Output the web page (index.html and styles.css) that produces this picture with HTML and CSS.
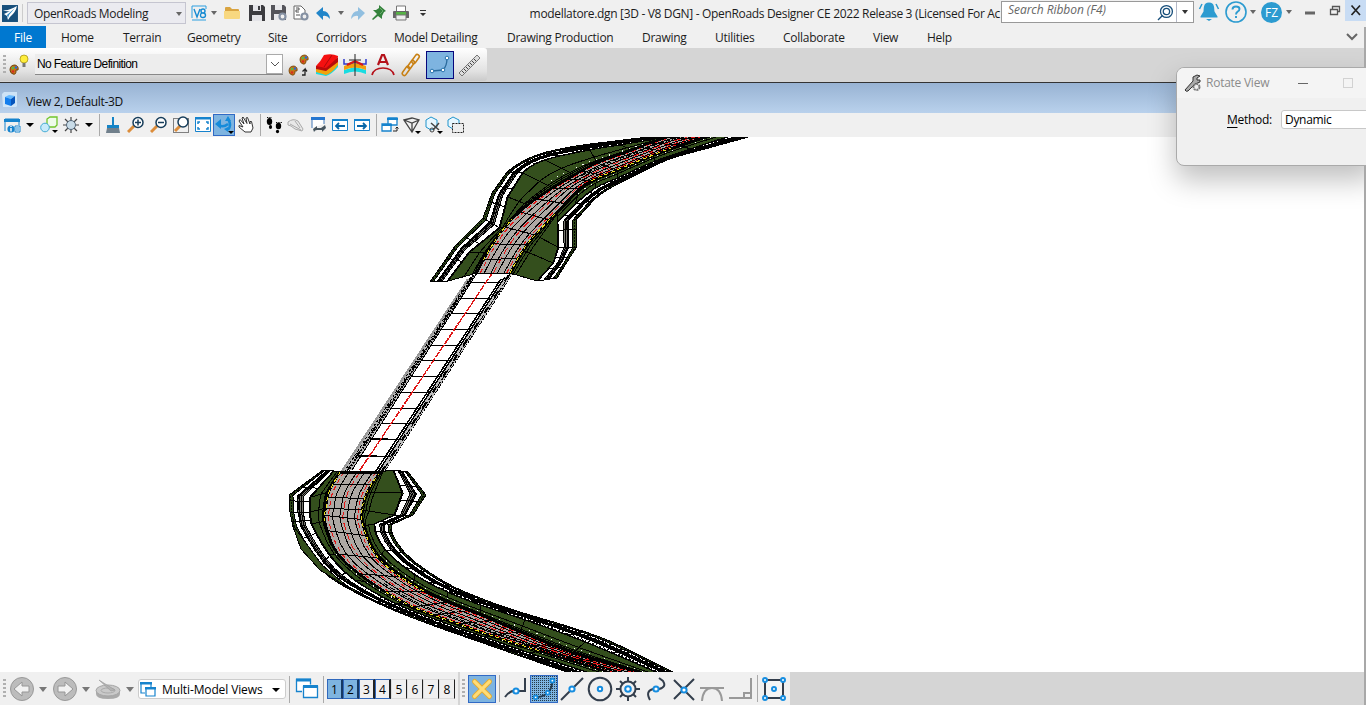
FILE: index.html
```html
<!DOCTYPE html>
<html lang="en">
<head>
<meta charset="utf-8">
<title>OpenRoads Designer</title>
<link rel="stylesheet" href="styles.css">
</head>
<body>
<div class="app">
  <header class="titlebar">
    <svg class="app-icon" viewBox="0 0 16 18"><rect width="16" height="17" y="1" fill="#174f7b"/><path d="M1 6q6 1 14-4-1 6-7 11l-2 3-1-4-3-2 6-3q-4 1-7-1z" fill="#fff"/><path d="M5 11l8-7-6 7-1 3z" fill="#2d86bf"/></svg>
    <i class="tsep"></i>
    <div class="workflow"><span>OpenRoads Modeling</span><i class="caret gray"></i></div>
    <div class="quick">
      <svg viewBox="0 0 16 16"><path d="M1 13V1h14v3M1 15h14" fill="none" stroke="#2d9fe0"/><path d="M3 4l3 8 3-8M12 4q2 0 2 2t-2 2q-2 0-2-2t2-2zM12 8q2.500 0 2.500 2.200T12 12.500t-2.500-2.300T12 8z" fill="none" stroke="#168bd2" stroke-width="1.400"/></svg>
      <i class="caret gray"></i>
      <svg viewBox="0 0 16 16"><path d="M1 3q0-1 1-1h4l2 2h6q1 0 1 1v9H1z" fill="#d9a441"/><path d="M0 6h16v7q0 1-1 1H1q-1 0-1-1z" fill="#f8d880"/></svg>
      <svg viewBox="0 0 16 16"><path d="M0 0h14l2 2v14H0z" fill="#3c3c40"/><path d="M4 0h8v6H4zM3 10h10v6H3z" fill="#e4e4e8"/><path d="M9 1h2v4H9z" fill="#3c3c40"/></svg>
      <svg viewBox="0 0 16 16"><path d="M0 0h13l2 2v13H0z" fill="#55555b"/><path d="M4 0h7v5H4zM3 9h8v6H3z" fill="#e9e9ec"/><circle cx="11.500" cy="11.500" r="3" fill="#f0f0f0" stroke="#8591a3" stroke-width="2.200"/></svg>
      <svg viewBox="0 0 16 16"><path d="M1 1h7l4 4v9H1z" fill="#fff" stroke="#666"/><path d="M3 3h3v2H3v2h3M3 10h4" stroke="#555" fill="none"/><circle cx="11.500" cy="11.500" r="3" fill="#eee" stroke="#8591a3" stroke-width="2.200"/></svg>
      <svg viewBox="0 0 16 16"><path d="M1 8l7-6v4q6 0 7 8-3-4-7-3v4z" fill="#2185c9"/></svg>
      <i class="caret gray"></i>
      <svg viewBox="0 0 16 16"><path d="M15 8L8 2v4Q2 6 1 14q3-4 7-3v4z" fill="#91bfe0"/></svg>
      <svg viewBox="0 0 16 16"><path d="M8 0l7 6-2 1-2 4v3l-4-3-5 4-1-1 5-5-4-4h3l3-2z" fill="#34823c"/><path d="M9 3l3 3-3 3" stroke="#6cae6c" fill="none"/></svg>
      <svg viewBox="0 0 16 16"><path d="M3.500 1h9v6h-9z" fill="#fff" stroke="#777"/><path d="M0 7q0-1 1-1h14q1 0 1 1v6H0z" fill="#666"/><path d="M3 7h10v3H3z" fill="#56b345"/><path d="M3 10h10v5H3z" fill="#eee" stroke="#777"/></svg>
      <svg viewBox="0 0 16 16"><path d="M5 5h6v1H5zM5 8h6l-3 3z" fill="#333"/></svg>
    </div>
    <div class="doc-title">modellatore.dgn [3D - V8 DGN] - OpenRoads Designer CE 2022 Release 3 (Licensed For Ac</div>
    <div class="search"><span>Search Ribbon (F4)</span><svg viewBox="0 0 18 18"><circle cx="10.500" cy="7.500" r="6"/><circle cx="10.500" cy="7.500" r="3.200"/><path d="M6.500 11.500L2 16"/></svg><b><i class="caret"></i></b></div>
    <div class="account">
      <svg viewBox="0 0 22 22"><path d="M11 1.500c6 0 5 6 5.500 9l3 5v1h-17v-1l3-5c.5-3-.5-9 5.500-9zM8 18h6l-3 2z" fill="#2c9bd0"/><path d="M4 3L1.500 8M18 3l2.500 5" stroke="#2c9bd0" stroke-width="1.500"/></svg>
      <svg viewBox="0 0 22 22"><circle cx="11" cy="11" r="10" fill="none" stroke="#2c9bd0" stroke-width="1.600"/><path d="M7.500 8.500q0-3 3.500-3t3.500 2.500q0 1.500-2 2.800Q11 12 11 13.500M11 15v2" fill="none" stroke="#2c9bd0" stroke-width="1.900"/></svg>
      <i class="caret gray"></i>
      <span class="avatar">FZ</span>
      <i class="caret gray"></i>
      <svg viewBox="0 0 22 22"><path d="M6 10.500h10v3H6z" fill="#666"/></svg>
      <svg viewBox="0 0 22 22"><path d="M5.500 8.500h7v5h-7zM7.500 8V5.500h7v5H13" fill="none" stroke="#555" stroke-width="1.300"/></svg>
      <span class="close"><svg viewBox="0 0 22 22"><path d="M6.500 5.500l8.500 9.500M15 5.500L6.500 15" stroke="#222" stroke-width="1.700"/></svg></span>
    </div>
  </header>

  <nav class="tabs">
    <span class="file">File</span><span>Home</span><span>Terrain</span><span>Geometry</span><span>Site</span><span>Corridors</span><span>Model Detailing</span><span>Drawing Production</span><span>Drawing</span><span>Utilities</span><span>Collaborate</span><span>View</span><span>Help</span>
    <svg viewBox="0 0 12 8"><path d="M1 1l5 5 5-5" fill="none" stroke="#666" stroke-width="2"/></svg>
  </nav>

  <div class="feature-row">
    <div class="feature-bar">
      <i class="grip"></i>
      <svg class="f-palette" viewBox="0 0 20 24"><path d="M1 17q0-5 5-5 4 1 3 5H7v1q0 4-3 3-3-1-3-4z" fill="#c67217" stroke="#70420c"/><circle cx="4" cy="15" r="1.300" fill="#52b948"/><circle cx="7" cy="14.500" r="1.200" fill="#2a66d8"/><circle cx="4" cy="18.500" r="1.200" fill="#d62b20"/><circle cx="15" cy="6" r="4" fill="#ffee3c" stroke="#9c8812" stroke-width=".7"/><path d="M13.500 10h3v4h-3z" fill="#777"/></svg>
      <div class="feature-select"><span>No Feature Definition</span><b><svg viewBox="0 0 10 6"><path d="M1 1l4 4 4-4" fill="none" stroke="#555"/></svg></b></div>
      <div class="feature-tools">
        <svg viewBox="0 0 24 24"><g stroke="#70420c" stroke-width=".8" fill="#c67217"><path d="M2 18q0-5 5-5 4 1 3 5H8v2q-1 3-3 2-3-1-3-4z"/><path d="M13 7q0-5 5-5 4 1 3 5h-2v2q-1 3-3 2-3-1-3-4z"/></g><g fill="#52b948"><circle cx="5" cy="16" r="1.300"/><circle cx="16" cy="5" r="1.300"/></g><g fill="#2a66d8"><circle cx="8" cy="15.500" r="1.200"/><circle cx="19" cy="4.500" r="1.200"/></g><g fill="#d62b20"><circle cx="5" cy="19.500" r="1.200"/><circle cx="16" cy="8.500" r="1.200"/></g><path d="M15 22h3v-6l-2.500 2.500m2.500-2.500l2 2.500" fill="none" stroke="#222" stroke-width="1.300"/></svg>
        <svg viewBox="0 0 24 24"><path d="M1 18l9 3q6-1 13-10v3q-6 7-12 9l-10-2z" fill="#16dce2"/><path d="M1 15l10 2L23 8v4q-6 8-12 10L1 19z" fill="#f2a20c"/><path d="M1 13v3l10 2L23 9V4l-12 9z" fill="#b80b0b"/><path d="M1 13Q6 8 9 2q8-2 14 1v1Q18 9 11 15z" fill="#f51010"/><path d="M17 2l-8 12" fill="none" stroke="#8c0909" stroke-width=".7"/></svg>
        <svg viewBox="0 0 24 24"><path d="M1 17l11-3 11 3v4q-11-5-22 0z" fill="#17dce1"/><path d="M1 13l11-4 11 4v4q-11-5-22 0z" fill="#f1a00e"/><path d="M1 6v5h5l6-2 6 2h5V6" fill="none" stroke="#303bd0" stroke-width="1.500"/><path d="M4 12l8-4 8 4" fill="none" stroke="#d81818" stroke-width="2"/><path d="M6 7h12M12 1v22" stroke="#222"/></svg>
        <svg viewBox="0 0 24 24"><path d="M7 12l4-10h2l4 10M8.500 9h7" fill="none" stroke="#b5121b" stroke-width="2.200"/><path d="M1 22q2-7 11-7t11 7" fill="none" stroke="#b5121b" stroke-width="1.700"/></svg>
        <svg viewBox="0 0 24 24"><g fill="none" stroke="#c88013" stroke-width="1.600"><rect x="14.500" y="1" width="4" height="10" rx="2" transform="rotate(35 16.500 6)"/><rect x="10" y="7" width="3.500" height="9" rx="1.700" transform="rotate(35 12 12)"/><rect x="5" y="13" width="4" height="10" rx="2" transform="rotate(35 7 18)"/></g></svg>
        <span class="active"><svg viewBox="0 0 24 24"><path d="M4 18l11-1q4-4 4-12" fill="none" stroke="#2b6b9d" stroke-width="1.300"/><g fill="#fff" stroke="#2874ad"><circle cx="4" cy="18" r="1.800"/><circle cx="15" cy="17" r="1.800"/><circle cx="19" cy="5" r="1.800"/></g></svg></span>
        <svg viewBox="0 0 24 24"><path d="M2 20L20 2l3 3L5 23z" fill="#ddd" stroke="#777"/><path d="M5 18l2 2m0-4l2 2m0-4l2 2m0-4l2 2m0-4l2 2m0-4l2 2m0-4l2 2" stroke="#444"/></svg>
      </div>
    </div>
  </div>

  <div class="view-title"><svg viewBox="0 0 16 16"><path d="M0 2L2 0h13v14l-1 1H1z" fill="#d8ecfc" opacity=".8"/><path d="M3 5l4-2 6 1-4 3z" fill="#65b9ff"/><path d="M3 5l6 2v7l-6-2z" fill="#147eed"/><path d="M9 7l4-3v7l-4 3z" fill="#0755bc"/></svg><span>View 2, Default-3D</span></div>

  <div class="view-tools">
    <svg viewBox="0 0 18 18"><path d="M2 15V3h14v6" fill="none" stroke="#1683cd"/><path d="M1 3h16v3H1z" fill="#1683cd"/><circle cx="8" cy="13" r="3.600" fill="#1683cd"/><path d="M8 12v3.500M8 10v1" stroke="#fff" stroke-width="1.400"/><path d="M12 10h5v6h-5zM13 12h3m-3 2h3" fill="#fff" stroke="#1683cd"/></svg>
    <i class="caret big"></i>
    <svg viewBox="0 0 18 18"><path d="M7 3l3-2h7v8l-2 2H7z" fill="#effbea" stroke="#72c52d" stroke-width="1.300"/><circle cx="5" cy="11.500" r="4.300" fill="#c7eafb" stroke="#44acd5"/><path d="M12 14h6l-3 3z"/></svg>
    <svg viewBox="0 0 18 18"><path d="M9 1v16M1 9h16M3 3l12 12M15 3L3 15" stroke="#444" stroke-width="1.200"/><circle cx="9" cy="9" r="4.500" fill="#c9dce8" stroke="#56697b"/></svg>
    <i class="caret big"></i><i class="vsep"></i>
    <svg viewBox="0 0 18 18"><path d="M8 1h2v8h5v3H3V9h5z" fill="#1684c6"/><path d="M3 12h12l1 5H2z" fill="#71808c"/></svg>
    <svg viewBox="0 0 18 18"><path d="M1 16l6-6" stroke="#dc8d3b" stroke-width="3"/><circle cx="11" cy="6.500" r="5" fill="#fff" stroke="#173d5a" stroke-width="1.500"/><path d="M8 6.500h6m-3-3v6" stroke="#173d5a" stroke-width="1.500"/></svg>
    <svg viewBox="0 0 18 18"><path d="M1 16l6-6" stroke="#dc8d3b" stroke-width="3"/><circle cx="11" cy="6.500" r="5" fill="#fff" stroke="#173d5a" stroke-width="1.500"/><path d="M8 6.500h6" stroke="#173d5a" stroke-width="1.500"/></svg>
    <svg viewBox="0 0 18 18"><path d="M1.500 2.500h15v14h-15z" fill="none" stroke="#111" stroke-dasharray="1 1"/><path d="M3 15l5-5" stroke="#dc8d3b" stroke-width="3"/><circle cx="11" cy="6" r="5" fill="#fff" stroke="#173d5a" stroke-width="1.500"/></svg>
    <svg viewBox="0 0 18 18"><path d="M1.500 1.500h15v14h-15z" fill="#fff" stroke="#1683cd"/><path d="M1 1h16v2.500H1z" fill="#1683cd"/><path d="M4 8V6h2m6 0h2v2M4 11v2h2m6 0h2v-2" fill="none" stroke="#1683cd" stroke-width="1.500"/></svg>
    <span class="active"><svg viewBox="0 0 20 20"><path d="M5 10q4 3 9-1M14 4q4 6 0 11" fill="none" stroke="#168bda" stroke-width="2.500"/><path d="M1 9l6-5v10zM11 6h6l-3-5zM10 14l4-2v5z" fill="#168bda"/><path d="M14 16h6l-3 3z"/></svg></span>
    <svg viewBox="0 0 18 18"><path d="M8 16L2 11V9.500l4 1.500-4-6 1-1.500 4 4.500-2-6 1-1 4 6.500L9 2l1.500-.5L13 8V5.500h1.500L16 12l-2 4z" fill="#fff" stroke="#333"/></svg>
    <i class="vsep"></i>
    <svg viewBox="0 0 18 18"><ellipse cx="4.500" cy="5.500" rx="2.700" ry="3.500"/><ellipse cx="5.500" cy="11" rx="1.600" ry="2"/><ellipse cx="13.500" cy="10" rx="2.700" ry="3.200"/><ellipse cx="12.500" cy="15.500" rx="1.600" ry="1.800"/><path d="M2 1.500h5m4 5h6" stroke="#111" stroke-width="1.200" stroke-dasharray="1 .7"/></svg>
    <svg viewBox="0 0 18 18"><path d="M1 6q5-4 10-1l5 8-1 2-7-2-4-3-3-1z" fill="#e8e8e8" stroke="#aaa"/><path d="M3 8l11 6M8 5l5 7" stroke="#aaa" fill="none"/></svg>
    <svg viewBox="0 0 18 18"><path d="M3 12V2h12v6" fill="#fff" stroke="#4379b8"/><path d="M2 1h14v3H2z" fill="#2677d0"/><path d="M4 13l4-3v2h4q3-2 4-3l1 3-4 4v-2H8q-2 0-3 2z" fill="#46555f"/></svg>
    <svg viewBox="0 0 18 18"><path d="M1.500 3.500h15v11h-15z" fill="#fff" stroke="#1683cd"/><path d="M1 3h16v2H1z" fill="#1683cd"/><path d="M14 10H5m3-3l-3 3 3 3" fill="none" stroke="#0867a8" stroke-width="1.800"/></svg>
    <svg viewBox="0 0 18 18"><path d="M1.500 3.500h15v11h-15z" fill="#fff" stroke="#1683cd"/><path d="M1 3h16v2H1z" fill="#1683cd"/><path d="M4 10h9m-3-3l3 3-3 3" fill="none" stroke="#0867a8" stroke-width="1.800"/></svg>
    <i class="vsep"></i>
    <svg viewBox="0 0 18 18"><path d="M7 8V2h9v7h-5M1 8h9v7H1z" fill="#fff" stroke="#1683cd" stroke-width="1.300"/><path d="M6 2h11v2H6zM1 8h10v2H1z" fill="#1683cd"/><path d="M12 15h4v-4m-1.500 1.500L16 11l1.500 1.500" fill="none" stroke="#222"/></svg>
    <svg viewBox="0 0 18 18"><path d="M1 4l8-2 7 2-7 12zM1 4l8 3 7-3M9 7v9" fill="none" stroke="#444" stroke-width="1.300"/><path d="M12 15h6l-3 3z"/></svg>
    <svg viewBox="0 0 18 18"><path d="M1 4l5-3 6 3v7l-6 3-5-3z" fill="#e7f7ff" stroke="#2194cc"/><path d="M6 7l8 7M14 7l-6 7" stroke="#444" stroke-width="1.500"/><circle cx="7" cy="14" r="2" fill="none" stroke="#444"/><path d="M12 15h6l-3 3z"/></svg>
    <svg viewBox="0 0 18 18"><path d="M1 4l5-3 6 3v6l-6 3-5-3z" fill="#e7f7ff" stroke="#2194cc"/><path d="M5.500 7.500h11v9h-11z" fill="#eee" stroke="#222" stroke-dasharray="2 1"/></svg>
  </div>

  <main class="canvas"><svg id="model" viewBox="0 137 1366 535" shape-rendering="crispEdges"></svg></main>

  <footer class="status">
    <div class="status-left">
      <i class="grip"></i>
      <svg viewBox="0 0 26 26"><circle cx="13" cy="13" r="11.500" fill="#bcbcbc" stroke="#999"/><path d="M5 13l8-7v4h7v6h-7v4z" fill="#f1f1f1" stroke="#969696"/></svg>
      <i class="caret dim"></i>
      <svg viewBox="0 0 26 26"><circle cx="13" cy="13" r="11.500" fill="#bcbcbc" stroke="#999"/><path d="M21 13l-8-7v4H6v6h7v4z" fill="#f1f1f1" stroke="#969696"/></svg>
      <i class="caret dim"></i>
      <svg viewBox="0 0 26 26"><path d="M1 15v3q0 5 12 5t12-5v-3z" fill="#aaa"/><ellipse cx="13" cy="14.500" rx="12" ry="5.500" fill="#c9c9c9" stroke="#a5a5a5"/><ellipse cx="13" cy="14.500" rx="7" ry="2.500" fill="none" stroke="#aaa"/><path d="M4 4l16 10-4 1z" fill="#b2b2b2" stroke="#999" stroke-width=".6"/></svg>
      <i class="caret dim"></i>
      <div class="models"><svg viewBox="0 0 18 18"><path d="M6 12H2V2h10v4M7 7h9v8H7z" fill="#fff" stroke="#1683cd" stroke-width="1.200"/><path d="M1 1h12v2.500H1zM6 6h11v2.500H6z" fill="#1683cd"/></svg><span>Multi-Model Views</span><i class="caret big"></i></div>
      <i class="vsep tall"></i>
      <svg viewBox="0 0 26 26"><path d="M8 15.500H2.500v-12h14v5M9.500 10.500h14v11h-14z" fill="#fff" stroke="#1683cd" stroke-width="1.300"/><path d="M2 4h15M9 10.500h15" stroke="#1683cd" stroke-width="3"/></svg>
      <i class="vsep tall"></i>
      <div class="views"><b class="open">1</b><b class="open">2</b><b class="lined">3</b><b class="lined">4</b><b>5</b><b>6</b><b>7</b><b>8</b></div>
    </div>
    <div class="snaps">
      <i class="grip"></i>
      <span class="active"><svg viewBox="0 0 28 28"><path d="M6 6l16 16M22 6L6 22" stroke="#e5ad31" stroke-width="5.500" stroke-linecap="round"/><path d="M6 6l16 16M22 6L6 22" stroke="#ffdc77" stroke-width="3.500" stroke-linecap="round"/></svg></span>
      <i class="vsep tall"></i>
      <svg viewBox="0 0 28 28"><path d="M3 22q5-7 11-6h9V3" fill="none" stroke="#333e4c" stroke-width="2"/><circle class="node" cx="14" cy="16" r="2.600"/></svg>
      <span class="active dots"><svg viewBox="0 0 28 28"><path d="M5 23q8 0 13-5 5-5 5-13" fill="none" stroke="#263a4b" stroke-width="2"/><g class="node"><circle cx="5" cy="23" r="2"/><circle cx="18" cy="18" r="2"/><circle cx="23" cy="5" r="2"/></g></svg></span>
      <svg viewBox="0 0 28 28"><path d="M3 25L25 3" stroke="#333e4c" stroke-width="2"/><circle class="node" cx="14" cy="14" r="2.600"/></svg>
      <svg viewBox="0 0 28 28"><circle cx="14" cy="14" r="11.300" fill="none" stroke="#333e4c" stroke-width="2"/><circle class="node" cx="14" cy="14" r="2.200"/></svg>
      <svg viewBox="0 0 28 28"><path d="M14 2v24M2 14h24M6 6l16 16M22 6L6 22" stroke="#333e4c" stroke-width="2"/><circle cx="14" cy="14" r="7.500" fill="#f0f0f0" stroke="#333e4c" stroke-width="2"/><circle class="node" cx="14" cy="14" r="2.800"/></svg>
      <svg viewBox="0 0 28 28"><path d="M8 25q-5-9 3-11h6q8-2 4-8l-4-3" fill="none" stroke="#333e4c" stroke-width="2"/><circle class="node" cx="14" cy="14" r="2.600"/></svg>
      <svg viewBox="0 0 28 28"><path d="M4 5l20 20M24 4L4 24" stroke="#333e4c" stroke-width="2"/><circle class="node" cx="14" cy="15" r="2.600"/></svg>
      <svg viewBox="0 0 28 28"><path d="M2 13h24M4 26q1-13 10-13t10 13" fill="none" stroke="#999" stroke-width="2"/></svg>
      <svg viewBox="0 0 28 28"><path d="M2 23h22V3M17 22v-4h6" fill="none" stroke="#999" stroke-width="2"/></svg>
      <i class="vsep tall"></i>
      <svg viewBox="0 0 28 28"><path d="M5 5h18v18H5z" fill="#f5f5f5" stroke="#333e4c" stroke-width="2"/><g class="node"><circle cx="5" cy="5" r="2"/><circle cx="23" cy="5" r="2"/><circle cx="5" cy="23" r="2"/><circle cx="23" cy="23" r="2"/><circle cx="14" cy="14" r="2"/></g></svg>
    </div>
  </footer>

  <aside class="dialog">
    <div class="dialog-head"><svg viewBox="0 0 18 18"><path d="M1 16l8-9V3l4-2 3 1-3 2v2l3 0 0 2-5 2-7 7q-2 1-3-1z" fill="#aaa" stroke="#333"/><circle cx="12.500" cy="13" r="3" fill="#eee" stroke="#777" stroke-width="2" stroke-dasharray="2 .7"/></svg><span>Rotate View</span><i class="dmin"></i><i class="dmax"></i></div>
    <div class="dialog-body"><span><u>M</u>ethod:</span><div>Dynamic</div></div>
  </aside>
  <i class="edge-top"></i><i class="edge"></i>
</div>
<script src="model.js"></script>
</body>
</html>
```

FILE: styles.css
```css
* { box-sizing: border-box; }
body { margin: 0; background: #f0f0f0; font: 12px/16px "Open Sans", "Noto Sans", sans-serif; color: #1c1c1c; overflow: hidden; }
svg { display: block; }
.app { position: relative; width: 1366px; height: 705px; display: flex; flex-direction: column; overflow: hidden; white-space: nowrap; }
.caret { display: block; border: 3px solid transparent; border-top: 4px solid #333; border-bottom: 0; width: 6px; height: 4px; justify-self: center; }
.caret.gray { border-top-color: #666; }
.caret.dim { border-width: 5px 4px 0; width: 8px; height: 5px; border-top-color: #777; }
.caret.big { border-width: 4px 4px 0; width: 8px; height: 4px; border-top-color: #000; }
.vsep { display: block; width: 1px; height: 22px; background: #aaa; justify-self: center; }
.vsep.tall { height: 27px; }
.grip { display: block; width: 3px; height: 20px; background: repeating-linear-gradient(#b0b0b0 0 2px, transparent 2px 4px); }
.active { display: block; background: #7eb4e0; border: 1px solid #316ac5; }

.titlebar { height: 26px; flex: none; display: flex; position: relative; background: #f0f0f0; }
.app-icon { width: 16px; height: 18px; margin: 4px 0 0 2px; }
.tsep { width: 1px; height: 18px; background: #ccc; margin: 4px 3px 0 4px; }
.workflow { width: 160px; height: 22px; margin: 2px 0 0 1px; border: 1px solid #c5c5d0; background: #ebebf0; display: flex; align-items: center; justify-content: space-between; padding: 1px 3px 0 6px; letter-spacing: -.34px; }
.quick { display: grid; grid-template-columns: 20px 9px 28px 22px 22px 22px 22px 13px 21px 22px 22px 22px; margin-left: 3px; width: 248px; height: 25px; align-items: center; }
.quick svg { width: 16px; height: 16px; justify-self: center; }
.doc-title { margin-left: 93px; width: 473px; line-height: 27px; font-size: 12px; letter-spacing: -.33px; }
.search { width: 193px; height: 22px; margin-top: 1px; border: 1px solid #999; background: #fff; display: flex; font-style: italic; line-height: 16px; color: #666; padding-left: 6px; }
.search span { width: 149px; letter-spacing: -.05px; }
.search svg { width: 18px; height: 18px; margin-top: 2px; fill: none; stroke: #174f7b; stroke-width: 1.3; }
.search b { width: 17px; border-left: 1px solid #b5b9c8; display: grid; place-items: center; margin-left: 2px; }
.account { display: grid; grid-template-columns: 28px 25px 10px 27px 8px 33px 19px 21px; width: 171px; align-items: center; height: 24px; margin-left: 1px; }
.account svg { width: 22px; height: 22px; justify-self: center; }
.avatar { width: 21px; height: 21px; border-radius: 50%; background: #2c9bd0; color: #fff; text-align: center; line-height: 21px; font-size: 12px; justify-self: center; }
.close { width: 22px; height: 21px; background: #c8dcf4; align-self: start; }

.tabs { height: 22px; flex: none; display: grid; grid-template-columns: 61px 62px 64px 81px 48px 78px 113px 135px 73px 68px 90px 54px 419px 12px; line-height: 24px; background: #f0f0f0; letter-spacing: -.27px; }
.tabs .file { width: 46px; background: #0078d0; color: #fff; padding-left: 14px; }
.tabs svg { width: 12px; height: 8px; margin-top: 7px; }

.feature-row { height: 35px; flex: none; background: #d5d5d5; border-bottom: 1px solid #333; }
.feature-bar { width: 487px; height: 33px; background: linear-gradient(#fff, #e2e2e2 70%, #cacaca); display: flex; border-radius: 0 3px 3px 0; }
.feature-bar .grip { margin: 7px 0 0 3px; }
.f-palette { width: 20px; height: 24px; margin: 5px 0 0 3px; }
.feature-select { margin: 6px 0 0 6px; width: 248px; height: 21px; background: #ededed; border-bottom: 1px solid #888; display: flex; justify-content: space-between; font-size: 11.5px; letter-spacing: -.8px; word-spacing: 1px; color: #000; line-height: 19px; padding-left: 2px; -webkit-font-smoothing: antialiased; }
.feature-select span { font-family: "Liberation Sans", sans-serif; font-size: 12px; letter-spacing: -.62px; word-spacing: 0; line-height: 20px; }
.feature-select b { width: 17px; height: 20px; border: 1px solid #aaa; background: #fff; display: grid; place-items: center; }
.feature-select b svg { width: 10px; height: 6px; }
.feature-tools { display: grid; grid-template-columns: repeat(5, 28px) 29px 30px; margin-left: 2px; align-items: center; justify-items: center; height: 33px; }
.feature-tools svg { width: 24px; height: 24px; }
.feature-tools .active { width: 28px; height: 28px; border-color: #07077c; padding: 1px; }

.view-title { height: 30px; flex: none; background: linear-gradient(#98b3d3, #b9d1ec); display: flex; gap: 8px; align-items: center; padding: 7px 0 0 2px; color: #111; letter-spacing: -.32px; }
.view-title svg { width: 16px; height: 16px; margin-top: -3px; }
.view-tools { height: 24px; flex: none; background: #f0f0f0; display: grid; grid-template-columns: 24px 12px 25px 20px 16px 5px 22px 24px 22px 22px 21px 22px 22px 6px 22px 22px 22px 22px 22px 6px 22px 22px 22px 22px; align-items: center; justify-items: center; }
.view-tools svg { width: 18px; height: 18px; }
.view-tools .active { width: 22px; height: 22px; }
.view-tools .active svg { width: 20px; height: 20px; }

.canvas { height: 535px; flex: none; background: #fff; overflow: hidden; }
.canvas svg { width: 1366px; height: 535px; }

.status { height: 33px; flex: none; background: #d5d5d5; display: flex; }
.status-left { width: 458px; background: #f0f0f0; display: grid; grid-template-columns: 8px 28px 14px 29px 14px 29px 15px 150px 5px 29px 4px 132px; align-items: center; justify-items: center; padding-top: 1px; }
.status-left > svg { width: 26px; height: 26px; }
.models { width: 148px; height: 20px; background: #fff; border: 1px solid #ccc; border-radius: 3px; display: flex; align-items: center; padding: 1px 5px 0 0; color: #000; letter-spacing: -.12px; }
.models svg { width: 18px; height: 18px; margin-right: 5px; }
.models .caret { margin-left: auto; }
.views { display: flex; width: 128px; height: 20px; }
.views b { width: 16px; height: 20px; border: 1px solid #ddd; border-right: 1px solid #222; font-weight: 400; text-align: center; line-height: 19px; color: #000; }
.views .open { background: #7eb4e0; border: 1px solid #2f68bd; border-right: 2px solid #173963; }
.views .lined { border: 1px solid #2f68bd; border-right: 2px solid #222; }
.snaps { margin-left: 2px; width: 330px; background: #f0f0f0; display: grid; grid-template-columns: 7px 30px 5px 28px 28px 28px 28px 28px 28px 28px 28px 29px 4px 30px; align-items: center; justify-items: center; }
.snaps svg { width: 28px; height: 28px; }
.snaps .active { width: 28px; height: 28px; }
.snaps .active svg { width: 26px; height: 26px; }
.snaps .dots { background: #7eb4e0 conic-gradient(#263846 25%, transparent 0) 0 0 / 2px 2px; }
.node { fill: #fff; stroke: #168de0; stroke-width: 2; }

.dialog { position: absolute; left: 1176px; top: 67px; width: 200px; height: 99px; background: #f0f0f0; border: 1px solid #aaa; border-radius: 8px; box-shadow: 0 14px 28px rgba(0,0,0,.25); overflow: hidden; }
.dialog-head { height: 30px; background: #f4f4f4; display: flex; align-items: center; color: #8b8b8b; padding-left: 7px; letter-spacing: -.25px; }
.dialog-head svg { width: 18px; height: 18px; margin-right: 4px; }
.dialog-head span { width: 92px; }
.dmin { width: 10px; height: 1px; background: #666; }
.dmax { width: 10px; height: 10px; border: 1px solid #d2d2d2; margin-left: 35px; }
.dialog-body { display: flex; align-items: center; padding: 12px 0 0 50px; color: #000; }
.dialog-body span { width: 54px; flex: none; letter-spacing: -.3px; }
.dialog-body div { width: 110px; height: 19px; background: #fff; border: 1px solid #c8c8c8; border-radius: 3px; padding-left: 3px; line-height: 17px; letter-spacing: -.3px; }
.dialog-body u { text-underline-offset: 3px; }
.edge-top, .edge { position: absolute; right: 0; width: 2px; background: #a8a8a8; }
.edge-top { top: 27px; height: 41px; }
.edge { top: 166px; height: 539px; }
```

FILE: model.js
```js
const model = document.getElementById('model');
const NS = 'http://www.w3.org/2000/svg';
function path(points, options, closed) {
  const el = document.createElementNS(NS, 'path');
  el.setAttribute('d', 'M' + points.map(p => p.join(' ')).join('L') + (closed ? 'Z' : ''));
  el.setAttribute('fill', options.fill || 'none');
  if (options.stroke) el.setAttribute('stroke', options.stroke);
  el.setAttribute('stroke-width', options.width || 1);
  if (options.dash) el.setAttribute('stroke-dasharray', options.dash);
  model.appendChild(el);
}
const mix = (a, b, t) => [a[0] + (b[0] - a[0]) * t, a[1] + (b[1] - a[1]) * t];
const rail = (a, b, t) => a.map((p, i) => mix(p, b[i], t));
const band = (a, b, fill) => path(a.concat(b.slice().reverse()), { fill }, true);
// Subdivides a rail; from station `smoothFrom` on, points follow a spline.
function refine(points, smoothFrom) {
  const out = [];
  for (let i = 0; i < points.length - 1; i++) {
    const p0 = points[Math.max(0, i - 1)], p1 = points[i], p2 = points[i + 1], p3 = points[Math.min(points.length - 1, i + 2)];
    for (let j = 0; j < 3; j++) {
      const t = j / 3;
      out.push(i >= smoothFrom ? [0, 1].map(k => .5 * (2 * p1[k] + (p2[k] - p0[k]) * t + (2 * p0[k] - 5 * p1[k] + 4 * p2[k] - p3[k]) * t * t + (3 * p1[k] - p0[k] - 3 * p2[k] + p3[k]) * t * t * t)) : mix(p1, p2, t));
    }
  }
  out.push(points[points.length - 1]);
  return out;
}
function ribs(a, b, step) {
  a.forEach((p, i) => { if (i % step === 0) path([p, b[i]], { stroke: '#000' }); });
}
// Ditch and embankment terraces along one side of the carriageway.
function berm(outer, inner) {
  band(outer, inner, '#304a1b');
  band(rail(outer, inner, .18), rail(outer, inner, .4), '#fff');
  band(rail(outer, inner, .42), rail(outer, inner, .65), '#77776f');
  band(rail(outer, inner, .68), rail(outer, inner, .94), '#fff');
  [0, .18, .4, .48, .57, .66, .95, 1].forEach(t => path(rail(outer, inner, t), { stroke: '#000' }));
  path(rail(outer, inner, .08), { stroke: '#000', dash: '2 1' });
  path(rail(outer, inner, .43), { stroke: '#000', width: 2, dash: '9 2' });
  ribs(outer, inner, 2);
}
function corridor(rows, bermSmooth, curb) {
  const [A, B, C, D, E, F] = rows.map((r, i) => refine(r, i === 2 || i === 3 ? 0 : bermSmooth));
  band(B, C, '#344f1d'); band(D, E, '#344f1d');
  ribs(B, C, 3); ribs(D, E, 3);
  [.55, .83, .89, .95].forEach(t => path(rail(B, C, t), { stroke: '#000' }));
  [.05, .12, .22].forEach(t => path(rail(D, E, t), { stroke: '#000' }));
  path(rail(D, E, .5).slice(9), { stroke: '#000' });
  path(rail(B, C, .75).slice(12), { stroke: '#fff', dash: '1 6' });
  path(rail(D, E, .35).slice(12), { stroke: '#fff', dash: '1 7' });
  berm(A, B); berm(F, E);
  // Terraces narrow to a dense hatch towards the far end of each corridor.
  [.3, .82].forEach(t => {
    path(rail(A, B, t).slice(17), { stroke: '#000', dash: '2 2' });
    path(rail(F, E, t).slice(17), { stroke: '#000', dash: '2 2' });
  });
  band(C, D, '#aea9a4');
  [.22, .42, .62, .82].forEach(t => path(rail(C, D, t), { stroke: '#000' }));
  [.1, .5, .9].forEach(t => path(rail(C, D, t), { stroke: '#e51616', dash: t === .5 ? '7 4' : '5 3' }));
  ribs(C, D, 2);
  path(rail(C, D, .3).slice(15), { stroke: '#000', dash: '5 2' });
  path(rail(C, D, .72).slice(15), { stroke: '#e51616', dash: '4 5' });
  path(C, { stroke: '#000', width: 2 });
  path(D, { stroke: '#000', width: 2 });
  curb(C, D).forEach(line => path(line, { stroke: '#e6dd19', width: 1, dash: '4 3' }));
}

// Bridge deck between the two corridors.
const leftOut = [[468, 279], [342, 471]], leftIn = [[477, 273], [352, 470]];
const rightIn = [[501, 279], [376, 471]], rightOut = [[513, 273], [385, 471]];
band(leftOut, leftIn, '#b5b5b5'); band(rightIn, rightOut, '#bdbdbd');
band(rail(rightIn, rightOut, .08), rail(rightIn, rightOut, .4), '#fff');
path(leftOut, { stroke: '#999', width: 2 });
path(rail(leftOut, leftIn, .3), { stroke: '#000', dash: '3 2' });
path(rail(leftOut, leftIn, .65), { stroke: '#000', width: 2, dash: '2 1' });
path(rail(leftOut, leftIn, .5), { stroke: '#000', dash: '7 8' });
path(leftIn, { stroke: '#000' });
path(rightIn, { stroke: '#000', width: 1.5 });
path(rail(rightIn, rightOut, .3), { stroke: '#000', width: 1.5 });
path(rail(rightIn, rightOut, .65), { stroke: '#000', width: 2, dash: '7 12' });
path(rail(rightIn, rightOut, .75), { stroke: '#000', dash: '6 2' });
path(rightOut, { stroke: '#000', dash: '2 1' });
[282, 298, 313, 329, 345, 360, 376, 392, 408, 423, 439, 456].forEach(y => {
  const x = 350 + (470 - y) * 125 / 197;
  path([[x, y], [x + (y > 435 ? 18 : 30), y + .5]], { stroke: '#000', width: y > 435 ? 2 : 1 });
  path([[x + 15, y], [x + 32, y + .5]], { stroke: '#000' });
});
path([[493, 272], [358, 473]], { stroke: '#e01717', width: 1.5, dash: '7 1' });

corridor([
  [[430,282],[455,246],[483,218],[492,193],[507,172],[534,156],[570,147],[615,141],[640,138],[665,136]],
  [[448,281],[470,252],[500,228],[508,197],[523,173],[545,160],[590,150],[620,145],[650,140],[670,136]],
  [[477,273],[488,252],[505,227],[528,205],[553,188],[575,175],[597,163],[633,150],[650,143],[672,136]],
  [[510,273],[523,250],[535,235],[557,212],[580,188],[597,178],[617,170],[653,155],[680,145],[708,136]],
  [[537,281],[553,263],[558,247],[557,222],[575,204],[595,188],[617,178],[655,161],[690,149],[730,136]],
  [[557,278],[567,262],[576,248],[576,220],[593,201],[607,190],[630,178],[667,160],[705,149],[752,136]]
], 4, (C, D) => [C.slice(2, 8), D.slice(0, 10), D.slice(14, 24)]);
corridor([
  [[323,470],[289,495],[290,512],[293,527],[320,568],[347,588],[393,610],[440,628],[480,642],[520,656],[570,673]],
  [[334,471],[311,497],[310,512],[312,524],[330,555],[355,580],[395,603],[440,621],[485,637],[530,653],[590,673]],
  [[340,472],[329,492],[326,508],[325,521],[338,554],[372,583],[413,607],[445,619],[490,635],[540,651],[612,673]],
  [[380,472],[367,492],[362,510],[363,526],[378,558],[413,585],[447,602],[480,615],[520,632],[573,653],[643,673]],
  [[393,470],[402,493],[394,515],[374,524],[385,550],[415,575],[447,592],[480,605],[525,620],[585,642],[658,673]],
  [[408,472],[426,495],[413,515],[391,525],[405,553],[443,581],[480,598],[520,612],[570,627],[612,642],[675,673]]
], 3, (C, D) => [C.slice(0, 10), D.slice(0, 17), C.slice(16, 28)]);
// Green toe of the western embankment.
path([[292, 524], [301, 549], [320, 570], [352, 590], [393, 610], [347, 586], [322, 565]], { fill: '#344f1d', stroke: '#000' }, true);
path([[340, 472], [382, 472]], { stroke: '#000', width: 3 });
path([[477, 273], [512, 273]], { stroke: '#000' });
```
